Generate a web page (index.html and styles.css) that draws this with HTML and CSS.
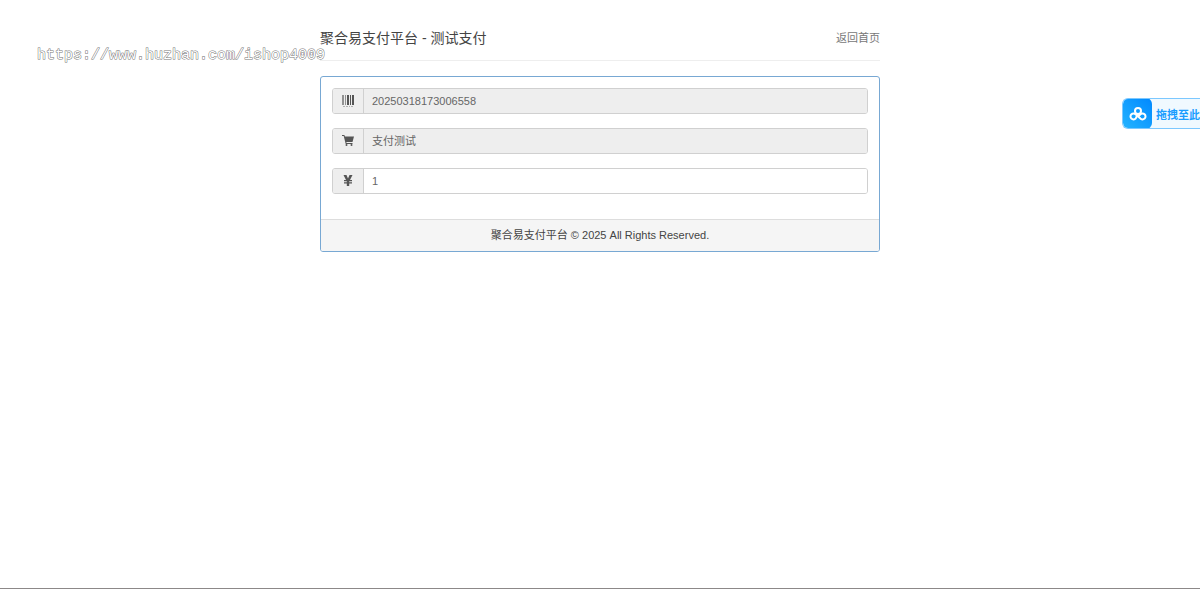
FILE: index.html
```
<!DOCTYPE html>
<html lang="zh-CN">
<head>
    <meta charset="UTF-8">
    <meta name="viewport" content="width=device-width, initial-scale=1.0">
    <title>聚合易支付平台 - 测试支付</title>
    <link rel="stylesheet" href="styles.css">
</head>
<body>
    <div class="container">
        <header class="header">
            <h3>聚合易支付平台 - 测试支付</h3>
            <a href="#">返回首页</a>
        </header>

        <div class="panel">
            <form class="panel-body">
                <div class="input-group">
                    <label class="addon" for="tradeNo" aria-label="订单号">
                        <svg width="12" height="12" viewBox="0 0 12 12" fill="currentColor">
                            <path opacity=".6" d="M0 0h2v10H0zM3 0h1v10H3z"/>
                            <path d="M5 0h2v10H5zM8 0h1v10H8zM10 0h2v10h-2z"/>
                            <path opacity=".4" d="M1 11h2v1H1zM4 11h2v1H4zM7 11h1v1H7zM9 11h2v1H9z"/>
                        </svg>
                    </label>
                    <input type="text" id="tradeNo" name="tradeNo" value="20250318173006558" disabled>
                </div>
                <div class="input-group">
                    <label class="addon" for="subject" aria-label="商品名称">
                        <svg width="12" height="12" viewBox="0 0 12 12" fill="currentColor">
                            <path d="M0 0h2.400l.5 1.600H12L10.500 7H4.300l.3 1H10.500v1H3.700L1.700 1H0z"/>
                            <circle cx="4.500" cy="10" r="1"/>
                            <circle cx="9.500" cy="10" r="1"/>
                        </svg>
                    </label>
                    <input type="text" id="subject" name="subject" value="支付测试" disabled>
                </div>
                <div class="input-group">
                    <label class="addon" for="money" aria-label="金额">
                        <svg width="12" height="12" viewBox="0 0 12 12" fill="currentColor">
                            <path d="M1.500 0h3L6 3.500 7.500 0h3L8 5h2v1.200H7.200v1H10v1.200H7.200V11H4.800V8.400H2V7.200h2.800v-1H2V5h2z"/>
                        </svg>
                    </label>
                    <input type="text" id="money" name="money" value="1">
                </div>
            </form>
            <footer class="panel-footer">聚合易支付平台 © 2025 All Rights Reserved.</footer>
        </div>
    </div>

    <div class="watermark">https://www.huzhan.com/ishop4009</div>

    <!-- Floating upload button -->
    <button type="button" class="drop-upload">
        <span class="drop-icon">
            <svg width="18" height="18" viewBox="0 0 18 18" fill="none" stroke="#ffffff" stroke-width="2">
                <circle cx="9" cy="6" r="3"/>
                <path d="M9 9L6.800 13.300A3 3 0 1 1 6.800 9.500L11.200 13.300A3 3 0 1 0 11.200 9.500L9 11.500"/>
            </svg>
        </span>
        <span class="drop-text">拖拽至此</span>
    </button>

    <div class="bottom-line"></div>
</body>
</html>
```

FILE: styles.css
```
* {
    box-sizing: border-box;
}

body {
    font-family: "Liberation Sans", "Noto Sans CJK SC", sans-serif;
    font-size: 11px;
    line-height: 16px;
    color: #444444;
    background-color: #ffffff;
    margin: 0;
    overflow-x: hidden;
}

.container {
    width: 100%;
    max-width: 560px;
    margin: 0 auto;
    padding-top: 16px;
}

.header {
    display: flex;
    align-items: center;
    justify-content: space-between;
    height: 45px;
    margin-bottom: 15px;
    border-bottom: 1px solid #eeeeee;
}

.header h3 {
    margin: 0;
    font-size: 14px;
    font-weight: normal;
}

.header a {
    color: #777777;
    text-decoration: none;
}

.panel {
    border: 1px solid #78a8d3;
    border-radius: 3px;
    overflow: hidden;
}

.panel-body {
    display: flex;
    flex-direction: column;
    gap: 14px;
    padding: 11px 11px 25px;
}

.input-group {
    display: flex;
    height: 26px;
    border: 1px solid #d0d0d0;
    border-radius: 3px;
    overflow: hidden;
}

.addon {
    display: flex;
    align-items: center;
    justify-content: center;
    width: 31px;
    background-color: #eeeeee;
    border-right: 1px solid #d0d0d0;
    color: #555555;
}

.input-group input {
    flex: 1;
    min-width: 0;
    padding: 0 8px;
    border: none;
    outline: none;
    background-color: #ffffff;
    color: #666666;
    font: inherit;
}

.input-group input:disabled {
    background-color: #eeeeee;
}

.panel-footer {
    padding: 7px 11px 8px;
    background-color: #f5f5f5;
    border-top: 1px solid #dddddd;
    text-align: center;
}

/* Outlined text over the page */
.watermark {
    position: absolute;
    top: 47px;
    left: 37px;
    font-family: "Liberation Mono", monospace;
    font-size: 15px;
    line-height: 18px;
    color: #ffffff;
    -webkit-text-stroke: 1px #777777;
    paint-order: stroke fill;
    pointer-events: none;
}

.drop-upload {
    position: fixed;
    top: 98px;
    right: 0;
    display: flex;
    align-items: center;
    width: 78px;
    height: 31px;
    padding: 0;
    border: 1px solid #7cc8ff;
    border-right: none;
    border-radius: 6px 0 0 6px;
    background-color: #f0f9ff;
    color: #1a9dff;
    font-family: inherit;
    font-size: 11px;
    font-weight: bold;
    overflow: hidden;
    cursor: pointer;
}

.drop-icon {
    display: flex;
    flex: none;
    align-items: center;
    justify-content: center;
    width: 29px;
    height: 31px;
    border-radius: 6px;
    background: linear-gradient(45deg, #24b4ff, #0088ff);
}

.drop-text {
    padding-left: 4px;
    white-space: nowrap;
}

.bottom-line {
    position: fixed;
    left: 0;
    right: 0;
    bottom: 0;
    height: 1px;
    background-color: #8c8888;
}
```
